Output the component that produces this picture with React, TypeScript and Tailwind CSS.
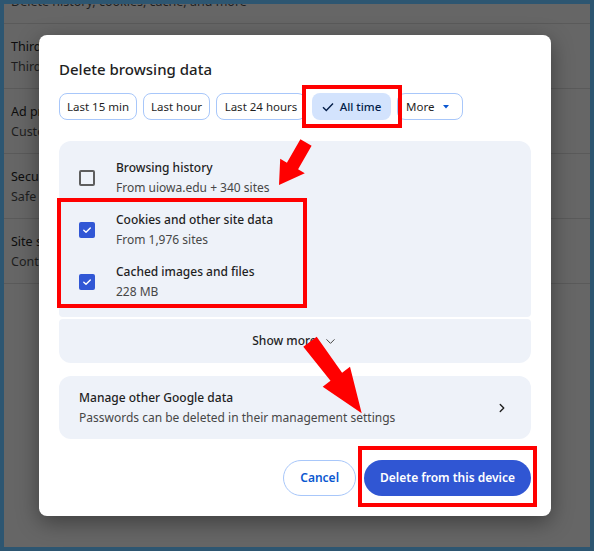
import { ChevronDown, ChevronRight } from 'lucide-react';

const settingsRows: [string, string][] = [
  ['Delete browsing data', 'Delete history, cookies, cache, and more'],
  ['Third-party cookies', 'Third-party cookies are blocked in Incognito mode'],
  ['Ad privacy', 'Customize the info used by sites to show you ads'],
  ['Security', 'Safe Browsing (protection from dangerous sites) and other security settings'],
  ['Site settings', 'Controls what information sites can use and show (location, camera, pop-ups, and more)'],
];

const dataTypes = [
  { title: 'Browsing history', detail: 'From uiowa.edu + 340 sites', checked: false },
  { title: 'Cookies and other site data', detail: 'From 1,976 sites', checked: true },
  { title: 'Cached images and files', detail: '228 MB', checked: true },
];

const ranges = [
  { label: 'Last 15 min', width: 'w-[78px]' },
  { label: 'Last hour', width: 'w-[67px]' },
  { label: 'Last 24 hours', width: 'w-[90px]' },
];

const Checkbox: React.FC<{ checked: boolean }> = ({ checked }) =>
  checked ? (
    <span className="flex h-[16px] w-[16px] items-center justify-center rounded-[2px] bg-[#3157d5]">
      <svg width="10" height="10" viewBox="0 0 10 10" fill="none">
        <path d="M1.8 5.2l2.2 2.1L8.3 2.9" stroke="white" strokeWidth="1.4" strokeLinecap="round" strokeLinejoin="round" />
      </svg>
    </span>
  ) : (
    <span className="block h-[16px] w-[16px] rounded-[2px] border-2 border-[#5e5e5e]" />
  );

export default function App() {
  return (
    <div className="relative h-[551px] w-[594px] overflow-hidden bg-[#2d5671] p-[4px] font-['Noto_Sans',sans-serif]">
      {/* dimmed settings page behind the dialog */}
      <div className="h-full overflow-hidden bg-[#666666]">
        <div className="-mt-[45px]">
          {settingsRows.map(([title, sub]) => (
            <div key={title} className="h-[65px] border-b border-[#5a5a5a] pl-[7px] pt-[13px] text-[12.5px] leading-[20px]">
              <div className="whitespace-nowrap text-[#0d0d0d]">{title}</div>
              <div className="whitespace-nowrap text-[#1e1e1e]">{sub}</div>
            </div>
          ))}
        </div>
      </div>

      {/* Delete browsing data dialog */}
      <div className="absolute left-[39px] top-[35px] w-[512px] rounded-[8px] bg-white px-[20px] pb-[20px] pt-[22px] shadow-[0_6px_22px_rgba(0,0,0,0.4)]">
        <h2 className="text-[15px] font-medium leading-[24px] text-[#1f1f1f]">Delete browsing data</h2>

        <div className="mt-[12px] flex gap-[6px] text-[11.5px] text-[#1f1f1f]">
          {ranges.map((r) => (
            <button key={r.label} className={`h-[27px] rounded-[8px] border border-[#a8c7fa] bg-white ${r.width}`}>
              {r.label}
            </button>
          ))}
          <button className="flex h-[27px] w-[79px] items-center justify-center gap-[6px] rounded-[8px] bg-[#d3e3fd] font-medium text-[#041e49]">
            <svg width="12" height="10" viewBox="0 0 12 10" fill="none">
              <path d="M1 5.2l3.3 3.3L11 1.5" stroke="#041e49" strokeWidth="1.4" />
            </svg>
            All time
          </button>
          <button className="flex h-[27px] w-[66px] items-center gap-[9px] rounded-[8px] border border-[#a8c7fa] bg-white pl-[8px]">
            More
            <svg width="6" height="4" viewBox="0 0 6 4">
              <path d="M0 0h6L3 3.5z" fill="#0b57d0" />
            </svg>
          </button>
        </div>

        <div className="mt-[21px] rounded-b-[4px] rounded-t-[12px] bg-[#eef2f9] pb-[9px] pt-[11px]">
          {dataTypes.map((d) => (
            <div key={d.title} className="flex h-[52px] items-center pl-[20px]">
              <div className="w-[37px]">
                <Checkbox checked={d.checked} />
              </div>
              <div className="text-[12px] leading-[20px]">
                <div className="font-medium text-[#1f1f1f]">{d.title}</div>
                <div className="text-[#474747]">{d.detail}</div>
              </div>
            </div>
          ))}
        </div>
        <div className="mt-[2px] flex h-[44px] items-center justify-center gap-[6px] rounded-b-[12px] rounded-t-[4px] bg-[#eef2f9] text-[12px] font-medium leading-[20px] text-[#1f1f1f]">
          Show more
          <ChevronDown size={15} strokeWidth={1.6} className="text-[#474747]" />
        </div>

        <div className="mt-[13px] flex h-[63px] items-center justify-between rounded-[12px] bg-[#eef2f9] pl-[20px] pr-[22px] text-[12px] leading-[20px]">
          <div>
            <div className="font-medium text-[#1f1f1f]">Manage other Google data</div>
            <div className="text-[#474747]">Passwords can be deleted in their management settings</div>
          </div>
          <ChevronRight size={14} strokeWidth={2.4} className="text-[#1f1f1f]" />
        </div>

        <div className="mt-[21px] flex justify-end gap-[8px] text-[12px] font-semibold">
          <button className="h-[36px] rounded-full border border-[#a8c7fa] bg-white px-[16px] text-[#0b57d0]">Cancel</button>
          <button className="h-[36px] rounded-full bg-[#3056d3] px-[16px] text-white">Delete from this device</button>
        </div>
      </div>

      {/* red callouts */}
      <div className="absolute left-[302px] top-[85px] h-[43px] w-[100px] border-4 border-[#ff0000]" />
      <div className="absolute left-[57px] top-[198px] h-[110px] w-[250px] border-4 border-[#ff0000]" />
      <div className="absolute left-[358px] top-[446px] h-[61px] w-[179px] border-4 border-[#ff0000]" />
      <svg className="pointer-events-none absolute inset-0" width="594" height="551" viewBox="0 0 594 551">
        <polygon
          points="300.4,139.2 311.6,145.8 298.1,169.3 304.8,173.2 279,185 280.2,158.8 286.9,162.7"
          fill="#ff0000"
        />
        <polygon
          points="303.3,346.7 316.7,336.7 342.1,372.7 350,366.7 361.7,413.3 322.7,386.7 330.5,380.7"
          fill="#ff0000"
        />
      </svg>
    </div>
  );
}
